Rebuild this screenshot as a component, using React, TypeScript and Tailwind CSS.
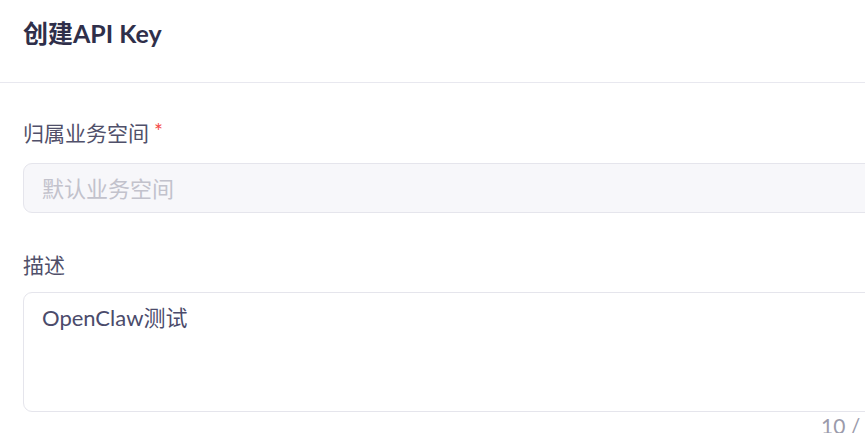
export default function App() {
  return (
    <div className="h-[433px] w-[865px] overflow-hidden bg-white font-['Lato','Noto_Sans_CJK_SC',sans-serif]">
      <div className="h-[83px] border-b border-[#e8e8ef] px-[23px] pt-[18px]">
        <h1 className="text-[25px] font-bold leading-[30px] text-[#2f2f4a]">创建API Key</h1>
      </div>

      <div className="w-[890px] pl-[23px] pt-[35px]">
        <label className="mb-[15px] flex h-[30px] items-center text-[21px] text-[#50506a]">
          归属业务空间
          <span className="ml-[5px] mt-[-4px] text-[21px] text-[#f54a45]">*</span>
        </label>
        <input
          disabled
          placeholder="默认业务空间"
          className="block h-[50px] w-full rounded-[9px] border border-[#e5e5ec] bg-[#f7f7fa] px-[18px] text-[22px] placeholder:text-[#c2c2cc]"
        />

        <label className="mb-[12px] mt-[37px] flex h-[30px] items-center text-[21px] text-[#50506a]">描述</label>
        <textarea
          defaultValue="OpenClaw测试"
          className="block h-[120px] w-full resize-none rounded-[9px] border border-[#e5e5ec] bg-white px-[18px] pt-[10px] text-[22px] leading-[30px] text-[#4b4b6b] outline-none"
        />
        <div className="mt-[2px] text-right text-[21px] leading-[24px] text-[#9b9bab]">10 / 50</div>
      </div>
    </div>
  );
}
